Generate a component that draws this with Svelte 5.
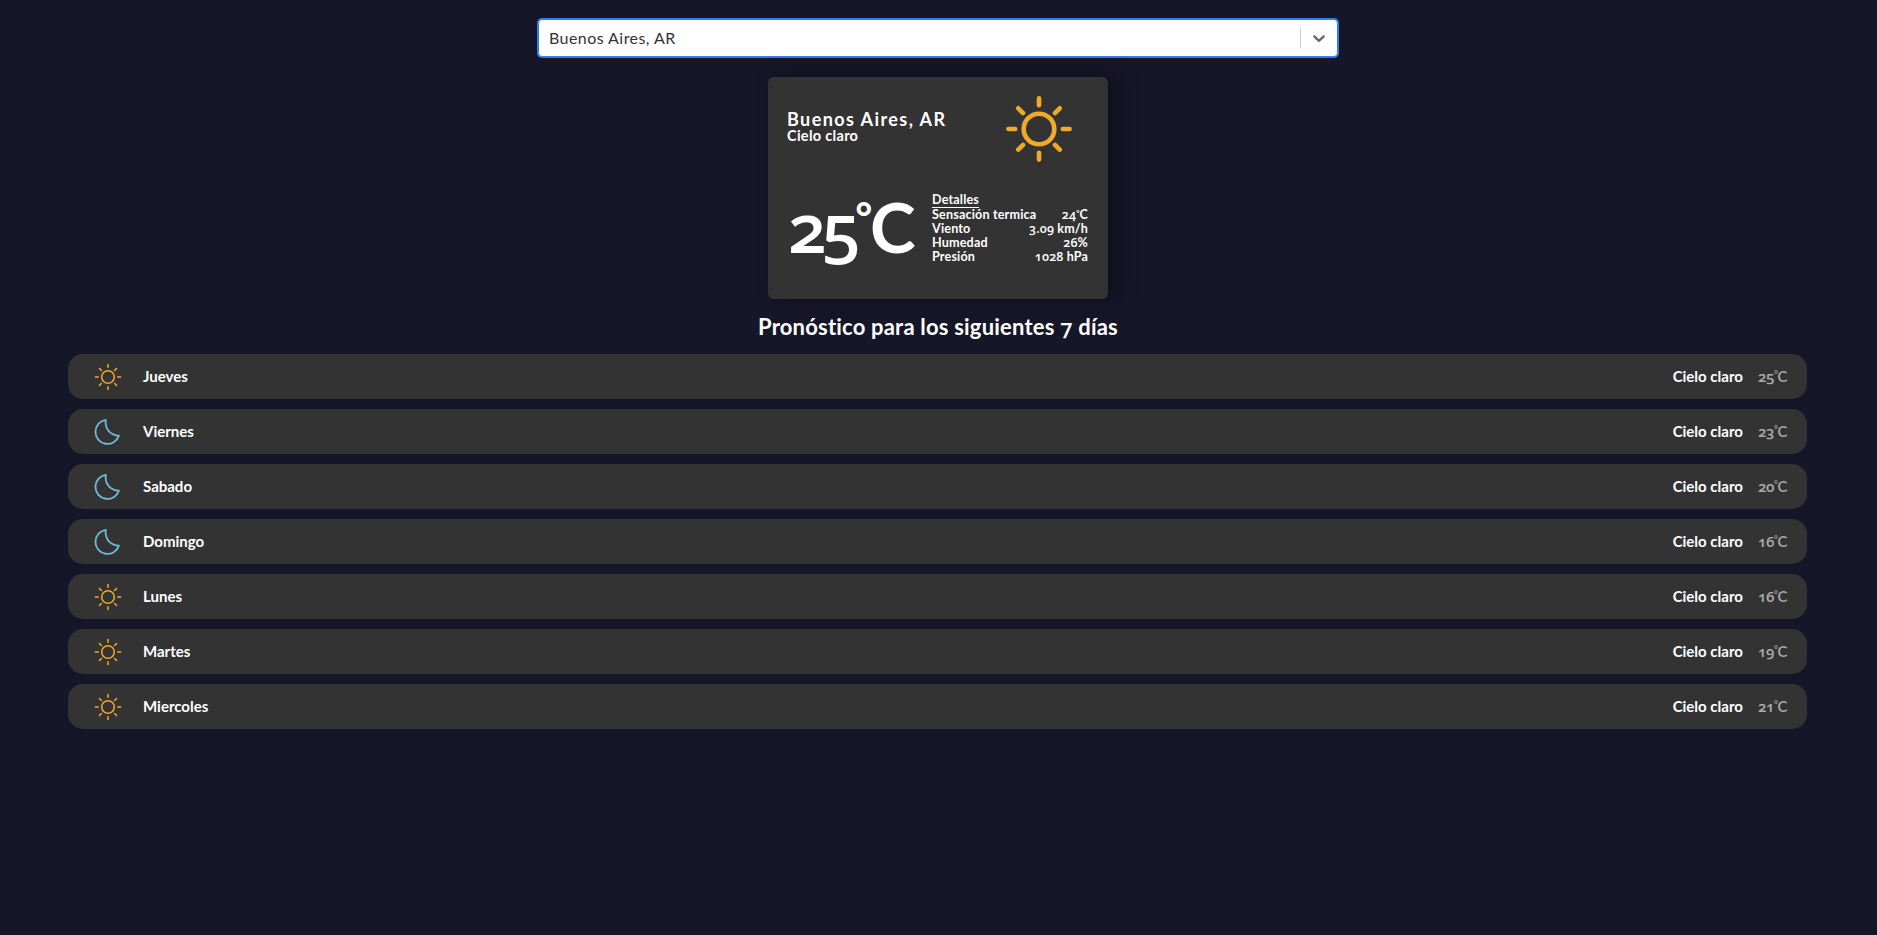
<script>
  const details = [
    ['Sensación termica', '24', 'C'],
    ['Viento', '3.09', ' km/h'],
    ['Humedad', '26', '%'],
    ['Presión', '1028', ' hPa']
  ];
  const days = [
    ['Jueves', 'sun', 25],
    ['Viernes', 'moon', 23],
    ['Sabado', 'moon', 20],
    ['Domingo', 'moon', 16],
    ['Lunes', 'sun', 16],
    ['Martes', 'sun', 19],
    ['Miercoles', 'sun', 21]
  ];
</script>

{#snippet sun(width)}
  <svg class="icon" viewBox="-50 -50 100 100" fill="none" stroke="#f0a929" stroke-width={width} stroke-linecap="round">
    <circle r="22.5" />
    <path d="M0-45V-35M0 35V45M-45 0H-35M35 0H45M-30.5-30.5L-23.5-23.5M30.5-30.5L23.5-23.5M-30.5 30.5L-23.5 23.5M30.5 30.5L23.5 23.5" />
  </svg>
{/snippet}

{#snippet moon()}
  <svg class="icon" viewBox="-47 -50 100 100" fill="none" stroke="#72b9d5" stroke-width="6.5" stroke-linejoin="round">
    <path d="M-5-43A43 43 0 1 0 42 13C14 11-10-8-5-43Z" />
  </svg>
{/snippet}

<main>
  <div class="select">
    <span class="value">Buenos Aires, AR</span>
    <span class="divider"></span>
    <svg class="chevron" viewBox="0 0 20 20" width="20" height="20"><path fill="#666" d="M4.516 7.548c0.436-0.446 1.043-0.481 1.576 0l3.908 3.747 3.908-3.747c0.533-0.481 1.141-0.446 1.574 0 0.436 0.445 0.408 1.197 0 1.615-0.406 0.418-4.695 4.502-4.695 4.502-0.217 0.223-0.502 0.335-0.787 0.335s-0.57-0.112-0.789-0.335c0 0-4.287-4.084-4.695-4.502s-0.436-1.17 0-1.615z" /></svg>
  </div>

  <section class="card">
    <div class="top">
      <div>
        <p class="city">Buenos Aires, AR</p>
        <p class="sky">Cielo claro</p>
      </div>
      <div class="big-icon">{@render sun(6.8)}</div>
    </div>
    <div class="bottom">
      <p class="temperature"><span class="num">25</span><span class="deg">°</span>C</p>
      <div class="details">
        <div class="row"><span class="title">Detalles</span></div>
        {#each details as [label, value, unit]}
          <div class="row">
            <span>{label}</span>
            <span class="reading"><span class="num">{value}</span>{#if unit === 'C'}<span class="deg">°</span>{/if}{unit}</span>
          </div>
        {/each}
      </div>
    </div>
  </section>

  <h2>Pronóstico para los siguientes <span class="num">7</span> días</h2>

  <div class="forecast">
    {#each days as [name, icon, temp]}
      <div class="day">
        <div class="small-icon">
          {#if icon === 'sun'}{@render sun(5.5)}{:else}{@render moon()}{/if}
        </div>
        <span class="name">{name}</span>
        <span class="desc">Cielo claro</span>
        <span class="temp"><span class="num">{temp}</span><span class="deg">°</span>C</span>
      </div>
    {/each}
  </div>
</main>

<style>
  :global(body) {
    background: #161629;
    min-height: 100vh;
  }
  main {
    padding: 19px 1px 0 0;
    font-family: Lato, sans-serif;
    color: #fff;
  }
  p, h2 { margin: 0; }
  .icon { display: block; width: 100%; height: 100%; }
  .num { font-family: "Open Sans", sans-serif; font-feature-settings: "onum"; font-weight: 600; line-height: 0; }
  .deg { font-size: 0.62em; vertical-align: 0.44em; line-height: 0; }
  .select {
    box-sizing: border-box;
    width: 800px;
    height: 38px;
    margin: 0 auto;
    display: flex;
    align-items: center;
    background: #fff;
    border: 1px solid #2f7fe6;
    border-radius: 4px;
    box-shadow: 0 0 0 1px #2f7fe6;
    color: #333;
    font-size: 16px;
  }
  .value { flex: 1; padding: 0 0 2px 10px; letter-spacing: 0.44px; }
  .divider { width: 1px; height: 20px; background: #ccc; }
  .chevron { padding: 8px; }
  .card {
    box-sizing: border-box;
    width: 340px;
    height: 222px;
    margin: 20px auto 0;
    padding: 0 20px 20px;
    border-radius: 6px;
    background: #333;
    box-shadow: 10px -2px 20px 2px rgb(0 0 0 / 30%);
  }
  .top { display: flex; justify-content: space-between; align-items: center; height: 102px; }
  .city { margin-left: -1px; font-size: 18px; line-height: 16px; font-weight: 700; letter-spacing: 1.42px; padding-bottom: 2px; }
  .sky { margin-left: -1px; font-size: 14.5px; line-height: 14px; font-weight: 700; letter-spacing: 0.3px; padding-bottom: 3px; }
  .big-icon { width: 68px; height: 68px; margin-right: 15px; padding-top: 1px; }
  .bottom { display: flex; justify-content: space-between; align-items: center; height: 98px; }
  .temperature { font-size: 69px; line-height: 70px; font-weight: 700; letter-spacing: -4px; padding-bottom: 2px; white-space: nowrap; }
  .temperature .num { letter-spacing: -5px; }
  .temperature .deg { font-size: 0.58em; vertical-align: 0.52em; font-weight: 900; letter-spacing: -2px; }
  .details { width: 156px; font-size: 12.6px; font-weight: 700; letter-spacing: 0.16px; }
  .reading { font-size: 12.5px; }
  .row { display: flex; justify-content: space-between; line-height: 14px; }
  .title { border-bottom: 1px solid #fff; }
  h2 { margin-top: 15px; height: 24px; line-height: 25px; font-size: 22px; font-weight: 700; letter-spacing: 0.2px; text-align: center; }
  .forecast { margin: 16px 69px 0 68px; display: grid; gap: 10px; }
  .day {
    display: flex;
    align-items: center;
    height: 45px;
    padding: 0 20px 0 26px;
    box-sizing: border-box;
    border-radius: 15px;
    background: #333;
    font-size: 15px;
    font-weight: 700;
  }
  .small-icon { width: 28px; height: 28px; padding: 1px 1px 0 0; }
  .name { flex: 1; margin-left: 20px; padding-bottom: 1px; }
  .desc { padding-bottom: 1px; }
  .temp { margin-left: 15px; padding-bottom: 1px; color: #aaa; font-weight: 600; letter-spacing: -0.4px; }
</style>
